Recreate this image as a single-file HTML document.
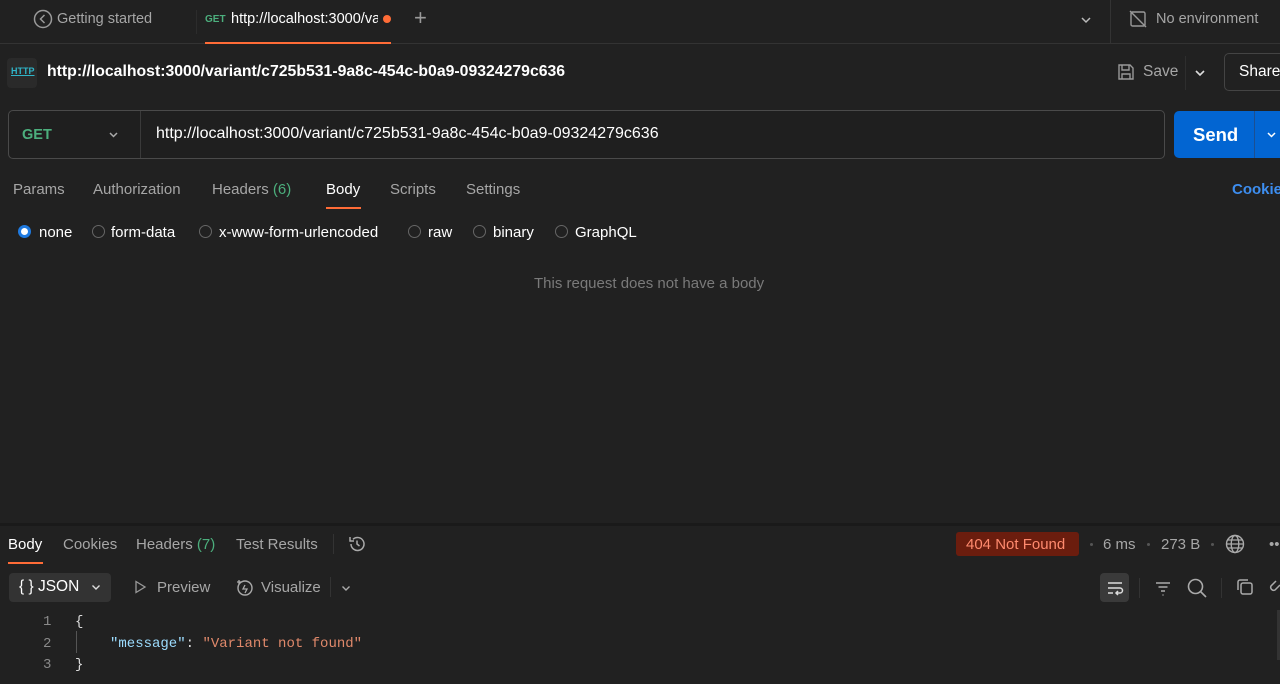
<!DOCTYPE html>
<html><head><meta charset="utf-8"><style>
*{margin:0;padding:0;box-sizing:border-box}
body{width:1280px;height:684px;background:#212121;font-family:"Liberation Sans",sans-serif;color:#ccc;position:relative;overflow:hidden;font-size:15px}
.a{position:absolute;white-space:nowrap}
.g{color:#a6a6a6}
.w{color:#fff}
</style></head><body>
<div class="a" style="left:0;top:43px;width:1280px;height:1px;background:#333"></div>
<div class="a" style="left:1110px;top:0;width:1px;height:43px;background:#333"></div>
<svg class="a" style="left:33px;top:9px" width="20" height="20" viewBox="0 0 20 20"><circle cx="10" cy="10" r="8.5" fill="none" stroke="#9a9a9a" stroke-width="1.5"/><path d="M11.5 6L7.5 10L11.5 14" fill="none" stroke="#9a9a9a" stroke-width="1.5"/></svg>
<div class="a g" style="left:57px;top:11px;font-size:14.5px">Getting started</div>
<div class="a" style="left:196px;top:10px;width:1px;height:24px;background:#2c2c2c"></div>
<div class="a" style="left:205px;top:14px;font-size:10px;font-weight:bold;color:#4caf7d">GET</div>
<div class="a w" style="left:231px;top:11px;font-size:14.5px;width:147px;overflow:hidden">http://localhost:3000/variant</div>
<div class="a" style="left:383px;top:15px;width:8px;height:8px;border-radius:50%;background:#ff6c37"></div>
<div class="a" style="left:205px;top:42px;width:186px;height:2px;background:#ff6c37"></div>
<div class="a" style="left:414px;top:5px;font-size:22px;color:#9a9a9a;font-weight:300">+</div>
<svg class="a" style="left:1080px;top:14px" width="12" height="12" viewBox="0 0 12 12"><path d="M2 4L6 8L10 4" fill="none" stroke="#bbb" stroke-width="1.5"/></svg>
<svg class="a" style="left:1129px;top:10px" width="18" height="18" viewBox="0 0 18 18"><rect x="2" y="2" width="14" height="14" rx="1.5" fill="none" stroke="#999" stroke-width="1.4"/><path d="M1 1L17 17" stroke="#999" stroke-width="1.4"/></svg>
<div class="a g" style="left:1156px;top:11px;font-size:14.5px">No environment</div>
<div class="a" style="left:7px;top:58px;width:30px;height:30px;background:#2a2a2a;border-radius:4px"></div>
<div class="a" style="left:11px;top:66px;font-size:9px;font-weight:bold;color:#2fb5c9;text-decoration:underline">HTTP</div>
<div class="a w" style="left:47px;top:63px;font-size:15.8px;font-weight:bold">http://localhost:3000/variant/c725b531-9a8c-454c-b0a9-09324279c636</div>
<svg class="a" style="left:1116px;top:62px" width="20" height="20" viewBox="0 0 20 20"><path d="M3 3H14L17 6V17H3Z M6 3V8H13V3 M6 17V12H14V17" fill="none" stroke="#999" stroke-width="1.4"/></svg>
<div class="a g" style="left:1143px;top:63px;font-size:15.5px">Save</div>
<div class="a" style="left:1185px;top:56px;width:1px;height:34px;background:#2e2e2e"></div>
<svg class="a" style="left:1193px;top:66px" width="14" height="14" viewBox="0 0 14 14"><path d="M3 5L7 9L11 5" fill="none" stroke="#ddd" stroke-width="1.6"/></svg>
<div class="a" style="left:1224px;top:53px;width:70px;height:38px;border:1px solid #444;border-radius:5px"></div>
<div class="a w" style="left:1239px;top:63px;font-size:15.5px">Share</div>
<div class="a" style="left:8px;top:110px;width:1157px;height:49px;border:1px solid #4a4a4a;border-radius:5px;background:#1f1f1f"></div>
<div class="a" style="left:140px;top:111px;width:1px;height:47px;background:#3a3a3a"></div>
<div class="a" style="left:22px;top:127px;font-size:14.5px;font-weight:bold;color:#4caf7d">GET</div>
<svg class="a" style="left:107px;top:128px" width="13" height="13" viewBox="0 0 13 13"><path d="M3 5L6.5 8.5L10 5" fill="none" stroke="#aaa" stroke-width="1.5"/></svg>
<div class="a w" style="left:156px;top:125px;font-size:16px">http://localhost:3000/variant/c725b531-9a8c-454c-b0a9-09324279c636</div>
<div class="a" style="left:1174px;top:111px;width:120px;height:47px;background:#0265d2;border-radius:5px"></div>
<div class="a" style="left:1254px;top:111px;width:1px;height:47px;background:#1c4f91"></div>
<div class="a w" style="left:1193px;top:124px;font-size:18.5px;font-weight:bold">Send</div>
<svg class="a" style="left:1265px;top:128px" width="13" height="13" viewBox="0 0 13 13"><path d="M3 5L6.5 8.5L10 5" fill="none" stroke="#fff" stroke-width="1.5"/></svg>
<div class="a g" style="left:13px;top:181px">Params</div>
<div class="a g" style="left:93px;top:181px">Authorization</div>
<div class="a g" style="left:212px;top:181px">Headers <span style="color:#4caf7d">(6)</span></div>
<div class="a w" style="left:326px;top:181px">Body</div>
<div class="a" style="left:326px;top:207px;width:35px;height:2px;background:#ff6c37"></div>
<div class="a g" style="left:390px;top:181px">Scripts</div>
<div class="a g" style="left:466px;top:181px">Settings</div>
<div class="a" style="left:1232px;top:181px;color:#3d8ef0;font-weight:bold">Cookies</div>
<div class="a" style="left:18px;top:225px;width:13px;height:13px;border-radius:50%;background:#fff;border:3px solid #1f7ae0"></div>
<div class="a w" style="left:39px;top:224px">none</div>
<div class="a" style="left:92px;top:225px;width:13px;height:13px;border-radius:50%;border:1px solid #666"></div>
<div class="a w" style="left:111px;top:224px">form-data</div>
<div class="a" style="left:199px;top:225px;width:13px;height:13px;border-radius:50%;border:1px solid #666"></div>
<div class="a w" style="left:219px;top:224px">x-www-form-urlencoded</div>
<div class="a" style="left:408px;top:225px;width:13px;height:13px;border-radius:50%;border:1px solid #666"></div>
<div class="a w" style="left:428px;top:224px">raw</div>
<div class="a" style="left:473px;top:225px;width:13px;height:13px;border-radius:50%;border:1px solid #666"></div>
<div class="a w" style="left:493px;top:224px">binary</div>
<div class="a" style="left:555px;top:225px;width:13px;height:13px;border-radius:50%;border:1px solid #666"></div>
<div class="a w" style="left:575px;top:224px">GraphQL</div>
<div class="a" style="left:534px;top:275px;color:#7a7a7a">This request does not have a body</div>
<div class="a" style="left:0;top:523px;width:1280px;height:3px;background:#1a1a1a"></div>
<div class="a w" style="left:8px;top:536px">Body</div>
<div class="a" style="left:8px;top:562px;width:35px;height:2px;background:#ff6c37"></div>
<div class="a g" style="left:63px;top:536px">Cookies</div>
<div class="a g" style="left:136px;top:536px">Headers <span style="color:#4caf7d">(7)</span></div>
<div class="a g" style="left:236px;top:536px">Test Results</div>
<div class="a" style="left:333px;top:534px;width:1px;height:20px;background:#333"></div>
<svg class="a" style="left:347px;top:534px" width="20" height="20" viewBox="0 0 20 20"><path d="M4 10A6.5 6.5 0 1 0 6 5.3" fill="none" stroke="#aaa" stroke-width="1.5"/><path d="M3 3V7H7" fill="none" stroke="#aaa" stroke-width="1.5"/><path d="M10 6.5V10L12.5 12" fill="none" stroke="#aaa" stroke-width="1.5"/></svg>
<div class="a" style="left:956px;top:532px;width:123px;height:24px;background:#6b1d0e;border-radius:3px"></div>
<div class="a" style="left:966px;top:536px;color:#ff8a6e">404 Not Found</div>
<div class="a" style="left:1090px;top:543px;width:3px;height:3px;border-radius:50%;background:#555"></div>
<div class="a g" style="left:1103px;top:536px">6 ms</div>
<div class="a" style="left:1147px;top:543px;width:3px;height:3px;border-radius:50%;background:#555"></div>
<div class="a g" style="left:1161px;top:536px">273 B</div>
<div class="a" style="left:1211px;top:543px;width:3px;height:3px;border-radius:50%;background:#555"></div>
<svg class="a" style="left:1225px;top:534px" width="20" height="20" viewBox="0 0 20 20"><circle cx="10" cy="10" r="8.5" fill="none" stroke="#aaa" stroke-width="1.4"/><ellipse cx="10" cy="10" rx="3.8" ry="8.5" fill="none" stroke="#aaa" stroke-width="1.4"/><path d="M1.5 10H18.5M3 6H17M3 14H17" stroke="#aaa" stroke-width="1.2"/></svg>
<div class="a g" style="left:1269px;top:536px">••</div>
<div class="a" style="left:9px;top:573px;width:102px;height:29px;background:#333;border-radius:4px"></div>
<div class="a w" style="left:19px;top:578px;font-size:15.5px">{ } JSON</div>
<svg class="a" style="left:90px;top:581px" width="12" height="12" viewBox="0 0 12 12"><path d="M2.5 4.5L6 8L9.5 4.5" fill="none" stroke="#ddd" stroke-width="1.4"/></svg>
<svg class="a" style="left:132px;top:579px" width="16" height="16" viewBox="0 0 16 16"><path d="M4 2.5L13 8L4 13.5Z" fill="none" stroke="#999" stroke-width="1.3"/></svg>
<div class="a g" style="left:157px;top:579px">Preview</div>
<svg class="a" style="left:235px;top:577px" width="20" height="20" viewBox="0 0 20 20"><circle cx="10" cy="11" r="7" fill="none" stroke="#aaa" stroke-width="1.4"/><path d="M4 3V7M2 5H6M10 8L8 12H12L10 16" fill="none" stroke="#aaa" stroke-width="1.3"/></svg>
<div class="a g" style="left:261px;top:579px">Visualize</div>
<div class="a" style="left:330px;top:577px;width:1px;height:20px;background:#333"></div>
<svg class="a" style="left:340px;top:582px" width="12" height="12" viewBox="0 0 12 12"><path d="M2.5 4.5L6 8L9.5 4.5" fill="none" stroke="#aaa" stroke-width="1.4"/></svg>
<div class="a" style="left:1100px;top:573px;width:29px;height:29px;background:#3a3a3a;border-radius:4px"></div>
<svg class="a" style="left:1105px;top:578px" width="20" height="20" viewBox="0 0 20 20"><path d="M3 5H17M3 10H15A2.5 2.5 0 0 1 15 15H11M3 15H8M13 13L11 15L13 17" fill="none" stroke="#ddd" stroke-width="1.5"/></svg>
<div class="a" style="left:1139px;top:578px;width:1px;height:20px;background:#333"></div>
<svg class="a" style="left:1153px;top:578px" width="20" height="20" viewBox="0 0 20 20"><path d="M3 5H17M5.5 9H14.5M8 13H12M9.5 17H10.5" stroke="#aaa" stroke-width="1.5"/></svg>
<svg class="a" style="left:1186px;top:577px" width="22" height="22" viewBox="0 0 22 22"><circle cx="9.5" cy="9.5" r="7" fill="none" stroke="#aaa" stroke-width="1.6"/><path d="M14.5 14.5L20 20" stroke="#aaa" stroke-width="1.6"/></svg>
<div class="a" style="left:1221px;top:578px;width:1px;height:20px;background:#333"></div>
<svg class="a" style="left:1235px;top:577px" width="20" height="20" viewBox="0 0 20 20"><rect x="6" y="6" width="11" height="11" rx="2" fill="none" stroke="#aaa" stroke-width="1.5"/><path d="M3 13V5A2 2 0 0 1 5 3H13" fill="none" stroke="#aaa" stroke-width="1.5"/></svg>
<svg class="a" style="left:1268px;top:577px" width="14" height="20" viewBox="0 0 14 20"><path d="M8 4L3 9A3 3 0 0 0 7 13L12 8" fill="none" stroke="#aaa" stroke-width="1.5"/></svg>
<div style="font-family:'Liberation Mono',monospace;font-size:14px">
<div class="a" style="left:43px;top:614px;color:#8a8a8a">1</div>
<div class="a" style="left:43px;top:636px;color:#8a8a8a">2</div>
<div class="a" style="left:43px;top:657px;color:#8a8a8a">3</div>
<div class="a" style="left:75px;top:614px;color:#ddd">{</div>
<div class="a" style="left:76px;top:631px;width:1px;height:22px;background:#555"></div>
<div class="a" style="left:110px;top:636px"><span style="color:#9cdcfe">"message"</span><span style="color:#ddd">: </span><span style="color:#e0896b">"Variant not found"</span></div>
<div class="a" style="left:75px;top:657px;color:#ddd">}</div>
</div>
<div class="a" style="left:1277px;top:610px;width:3px;height:50px;background:#333"></div>
</body></html>
